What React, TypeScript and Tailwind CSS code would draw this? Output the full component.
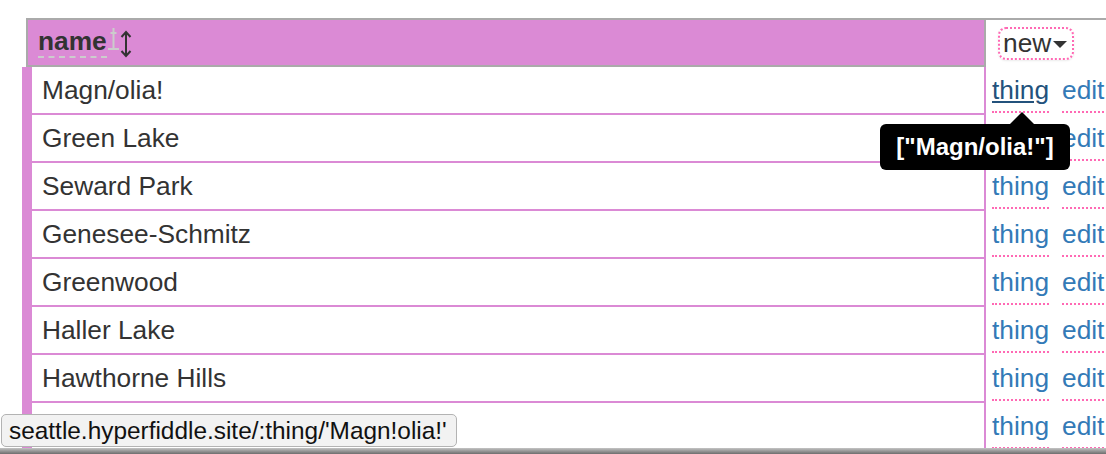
const ROWS = [
  "Magn/olia!",
  "Green Lake",
  "Seward Park",
  "Genesee-Schmitz",
  "Greenwood",
  "Haller Lake",
  "Hawthorne Hills",
  "",
];

function SortIcons() {
  return (
    <svg width="26" height="30" viewBox="0 0 26 30" className="ml-[1px] self-start mt-[8px]">
      {/* faint pin marker */}
      <path d="M5.5 0 V20 M2.5 5 H8.5" stroke="#cccccc" strokeWidth="2" fill="none" />
      <path d="M0 21 H11" stroke="#cccccc" strokeWidth="2" />
      {/* up/down arrow */}
      <path d="M18 4 V28" stroke="#333" strokeWidth="2" fill="none" />
      <path d="M13.5 9 L18 4 L22.5 9" stroke="#333" strokeWidth="2" fill="none" />
      <path d="M13.5 23 L18 28 L22.5 23" stroke="#333" strokeWidth="2" fill="none" />
    </svg>
  );
}

export default function App() {
  return (
    <div className="relative h-[454px] w-[1106px] overflow-hidden bg-white font-['Liberation_Sans',Arial,sans-serif] text-[#333]">
      <div className="pt-[18px]">
        {/* header */}
        <div className="ml-[26px] flex h-[49px] border-t-2 border-[#aaa]">
          <div className="flex w-[960px] items-center border-x-2 border-b-2 border-[#aaa] bg-[#db8ad5] pl-[10px]">
            <span className="inline-block border-b-2 border-dashed border-[#ccc] text-[26.3px] font-bold leading-[29px] text-[#333]">
              name
            </span>
            <SortIcons />
          </div>
          <div className="flex flex-1 items-center pl-[12px]">
            <button className="flex h-[33px] items-center rounded-[8px] border-2 border-dotted border-[#ff69b4] pl-[3px] pr-[5px] text-[26.3px] leading-none text-[#333] shadow-[0_1px_2px_rgba(0,0,0,0.08)]">
              new
              <span className="ml-[2px] mt-[2px] h-0 w-0 border-x-[7px] border-t-[7px] border-x-transparent border-t-[#333]" />
            </button>
          </div>
        </div>

        {/* rows */}
        {ROWS.map((name, i) => (
          <div key={i} className="ml-[22px] flex h-[48px]">
            <div className="w-[10px] bg-[#db8ad5]" />
            <div className="flex w-[952px] items-center border-b-2 border-[#db8ad5] pl-[10px] pt-[2px] text-[26.3px] text-[#333]">
              {name}
            </div>
            <div className="w-[2px] bg-[#db8ad5]" />
            <div className="flex items-center whitespace-nowrap pl-[6px] pt-[2px] text-[26.3px]">
              <a
                className={
                  i === 0
                    ? "inline-block border-b-2 border-dotted border-[#ff69b4] text-[#23527c] underline"
                    : "inline-block border-b-2 border-dotted border-[#ff69b4] text-[#337ab7]"
                }
              >
                thing
              </a>
              <a className="ml-[13px] inline-block border-b-2 border-dotted border-[#ff69b4] text-[#337ab7]">
                edit
              </a>
            </div>
          </div>
        ))}
      </div>

      {/* tooltip */}
      <div className="absolute left-[1010px] top-[112px] h-0 w-0 border-x-[12px] border-b-[12px] border-x-transparent border-b-black" />
      <div className="absolute left-[880px] top-[124px] flex h-[46px] w-[190px] items-center justify-center rounded-[6px] bg-black text-[24px] font-bold text-white">
        ["Magn/olia!"]
      </div>

      {/* status bar */}
      <div className="absolute left-[1px] top-[414px] h-[33px] w-[456px] rounded-[5px] border border-[#b3b3b3] bg-[#f2f2f2] pl-[7px] text-[24.4px] leading-[31px] text-[#111]">
        seattle.hyperfiddle.site/:thing/'Magn!olia!'
      </div>
      <div className="absolute bottom-0 left-0 h-[6px] w-full bg-linear-to-b from-[#c4c4c4] to-[#6e6e6e]" />
    </div>
  );
}
